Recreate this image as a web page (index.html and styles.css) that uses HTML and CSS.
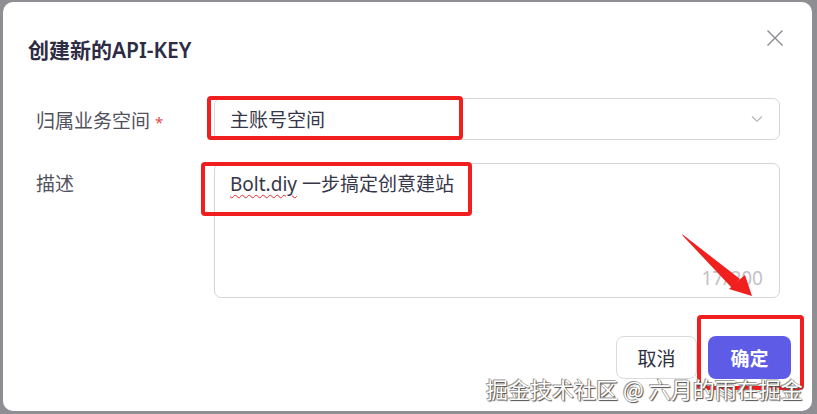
FILE: index.html
```html
<!DOCTYPE html>
<html lang="zh-CN">
<head>
<meta charset="utf-8">
<title>创建新的API-KEY</title>
<link rel="stylesheet" href="styles.css">
</head>
<body>
<div class="dialog">
  <div class="header">
    <h1 class="title">创建新的API-KEY</h1>
    <button class="close" aria-label="关闭">
      <svg width="18" height="18" viewBox="0 0 18 18"><path d="M1.5 1.5 L16.5 16.5 M16.5 1.5 L1.5 16.5" stroke="#8a8a90" stroke-width="1.4" fill="none"/></svg>
    </button>
  </div>
  <div class="row row-select">
    <label class="label">归属业务空间<span class="req">*</span></label>
    <div class="select">
      <span class="select-value">主账号空间</span>
      <svg class="chev" width="12" height="8" viewBox="0 0 12 8"><path d="M1 1.5 L6 6.2 L11 1.5" stroke="#b5b5ba" stroke-width="1.2" fill="none"/></svg>
    </div>
  </div>
  <div class="row row-text">
    <label class="label label-top">描述</label>
    <div class="textarea">
      <div class="ta-text"><span class="spell">Bolt.diy</span> 一步搞定创意建站</div>
      <div class="counter">17/200</div>
    </div>
  </div>
  <div class="footer">
    <button class="btn btn-cancel">取消</button>
    <button class="btn btn-ok">确定</button>
  </div>

  <div class="mark mark-1"></div>
  <div class="mark mark-2"></div>
  <div class="mark mark-3"></div>
  <svg class="arrow" width="90" height="80" viewBox="0 0 90 80">
    <polygon points="0,0 58,45 50,54 1,2" fill="#f0201e"/>
    <polygon points="70,62 47,55 56,47 63,41" fill="#f0201e"/>
  </svg>
  <div class="watermark">掘金技术社区 @ 六月的雨在掘金</div>
</div>
</body>
</html>
```
FILE: styles.css
```css
* { box-sizing: border-box; }
html, body { margin: 0; padding: 0; }
body {
  width: 817px;
  height: 414px;
  background: #8e8e93;
  overflow: hidden;
  font-family: "Noto Sans", "Noto Sans CJK SC", sans-serif;
}
.dialog {
  position: relative;
  margin: 2px 0 0 3px;
  width: 809px;
  height: 409px;
  background: #fff;
  border-radius: 10px;
  padding: 0 32px 0 33px;
  display: flex;
  flex-direction: column;
}
.header {
  display: flex;
  justify-content: space-between;
  align-items: flex-start;
  height: 96px;
  margin-left: -8px;
}
.title {
  margin: 34px 0 0 0;
  font-size: 21px;
  line-height: 28px;
  font-weight: 600;
  color: #2d2c44;
  font-family: "Noto Sans", "Noto Sans CJK SC", sans-serif;
}
.close {
  margin: 27px -4px 0 0;
  padding: 0;
  border: 0;
  background: none;
  width: 18px;
  height: 18px;
  display: block;
}
.close svg { display: block; }
.row {
  display: flex;
}
.label {
  width: 178px;
  flex: none;
  font-size: 19px;
  color: #52525e;
  line-height: 26px;
}
.row-select { height: 42px; align-items: center; }
.row-select .label { padding-top: 4px; }
.req {
  color: #e5484d;
  margin-left: 5px;
  font-size: 15px;
}
.select {
  flex: 1;
  height: 42px;
  border: 1px solid #d6d6da;
  border-radius: 7px;
  display: flex;
  align-items: center;
  justify-content: space-between;
  padding: 0 16px 0 15px;
}
.select-value {
  font-size: 19px;
  color: #363649;
  line-height: 26px;
  padding-top: 2px;
}
.chev { display: block; }
.row-text { margin-top: 23px; }
.label-top { padding-top: 8px; }
.textarea {
  flex: 1;
  height: 135px;
  border: 1px solid #d6d6da;
  border-radius: 7px;
  padding: 7px 16px 0 15px;
  display: flex;
  flex-direction: column;
  justify-content: space-between;
}
.ta-text {
  font-size: 19px;
  line-height: 26px;
  color: #363649;
}
.spell {
  text-decoration-line: underline;
  text-decoration-style: wavy;
  text-decoration-color: #e8262a;
  text-decoration-thickness: 1px;
  text-underline-offset: 3px;
}
.counter {
  align-self: flex-end;
  font-size: 19px;
  line-height: 24px;
  color: #c2c2c6;
  margin-bottom: 7px;
}
.footer {
  margin-top: 38px;
  margin-right: -11px;
  display: flex;
  justify-content: flex-end;
  gap: 11px;
}
.btn {
  height: 43px;
  border-radius: 8px;
  font-size: 19px;
  font-family: "Noto Sans", "Noto Sans CJK SC", sans-serif;
  padding: 0;
  cursor: pointer;
}
.btn-cancel {
  width: 81px;
  background: #fff;
  border: 1px solid #d9d9de;
  color: #2f2f3e;
}
.btn-ok {
  width: 83px;
  background: #5e5ce6;
  border: 0;
  color: #fff;
  font-weight: 600;
}
.mark {
  position: absolute;
  border: 4px solid #f01e1e;
  border-radius: 4px;
  pointer-events: none;
}
.mark-1 { left: 204px; top: 94px; width: 256px; height: 44px; }
.mark-2 { left: 198px; top: 160px; width: 271px; height: 54px; }
.mark-3 { left: 694px; top: 313px; width: 107px; height: 75px; }
.arrow {
  position: absolute;
  left: 679px;
  top: 232px;
}
.watermark {
  position: absolute;
  left: 483px;
  top: 371px;
  font-size: 22px;
  line-height: 30px;
  color: #fff;
  white-space: nowrap;
  font-family: "Noto Sans CJK SC", sans-serif;
  text-shadow: 1px 1px 1px #4a4a4a, -1px -1px 0 #9a9a9a, 0 0 1px #555;
}
```
